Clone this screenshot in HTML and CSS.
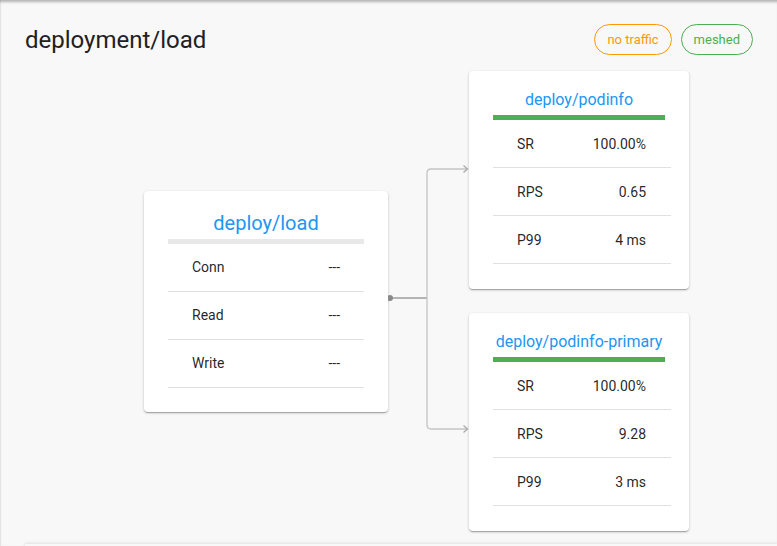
FILE: index.html
```html
<!DOCTYPE html>
<html>
<head>
<meta charset="utf-8">
<link rel="stylesheet" href="styles.css">
</head>
<body>
<div class="panel">
  <header class="header">
    <h1 class="title">deployment/load</h1>
    <div class="chips">
      <span class="chip chip-orange">no traffic</span>
      <span class="chip chip-green">meshed</span>
    </div>
  </header>
  <div class="graph">
    <div class="card card-src">
      <div class="card-title title-lg">deploy/load</div>
      <div class="bar bar-grey"></div>
      <div class="row"><span>Conn</span><span>---</span></div>
      <div class="row"><span>Read</span><span>---</span></div>
      <div class="row"><span>Write</span><span>---</span></div>
    </div>
    <svg class="links" width="81" height="459" viewBox="0 0 81 459">
      <path d="M2 227 H39" stroke="#9e9e9e" stroke-width="1.5" fill="none"/>
      <path d="M39 227 Q39 223 39 221 V102 Q39 98 43 98 H79" stroke="#c4c4c4" stroke-width="1.3" fill="none"/>
      <path d="M39 227 Q39 231 39 233 V354 Q39 358 43 358 H79" stroke="#c4c4c4" stroke-width="1.3" fill="none"/>
      <path d="M75.5 94.5 L79.5 98 L75.5 101.5" stroke="#a8a8a8" stroke-width="1.2" fill="none"/>
      <path d="M75.5 354.5 L79.5 358 L75.5 361.5" stroke="#a8a8a8" stroke-width="1.2" fill="none"/>
      <circle cx="2" cy="227" r="3" fill="#8a8a8a"/>
    </svg>
    <div class="targets">
      <div class="card card-dst">
        <div class="card-title title-md">deploy/podinfo</div>
        <div class="bar bar-green"></div>
        <div class="row"><span>SR</span><span>100.00%</span></div>
        <div class="row"><span>RPS</span><span>0.65</span></div>
        <div class="row"><span>P99</span><span>4 ms</span></div>
      </div>
      <div class="card card-dst">
        <div class="card-title title-md">deploy/podinfo-primary</div>
        <div class="bar bar-green"></div>
        <div class="row"><span>SR</span><span>100.00%</span></div>
        <div class="row"><span>RPS</span><span>9.28</span></div>
        <div class="row"><span>P99</span><span>3 ms</span></div>
      </div>
    </div>
  </div>
  <div class="next-paper"></div>
</div>
</body>
</html>
```
FILE: styles.css
```css
html, body {
  margin: 0;
  padding: 0;
  height: 100%;
  overflow: hidden;
}
body {
  font-family: Roboto, "Noto Sans", "Liberation Sans", sans-serif;
  background: #f8f8f8;
  color: rgba(0, 0, 0, 0.87);
}
.panel {
  height: 100%;
  background: #f8f8f8;
  box-shadow: inset 0 4px 3px -2px rgba(0, 0, 0, 0.28), inset 1px 0 1px rgba(0, 0, 0, 0.08);
  overflow: hidden;
}
.header {
  display: flex;
  justify-content: space-between;
  align-items: flex-start;
  padding: 24px 24px 0 25px;
}
.title {
  margin: 0;
  font-size: 24px;
  font-weight: 400;
  line-height: 32px;
  color: #212121;
}
.chips {
  display: flex;
  gap: 9px;
}
.chip {
  display: inline-flex;
  align-items: center;
  box-sizing: border-box;
  height: 31px;
  padding: 0 12px;
  border-radius: 16px;
  font-size: 13px;
  border: 1px solid;
}
.chip-orange {
  color: #ff9800;
  border-color: #ff9800;
}
.chip-green {
  color: #4caf50;
  border-color: #4caf50;
}
.graph {
  display: flex;
  align-items: center;
  margin-top: 15px;
  padding-left: 144px;
}
.card {
  background: #fff;
  border-radius: 4px;
  box-shadow: 0 1px 3px rgba(0, 0, 0, 0.2), 0 1px 1px rgba(0, 0, 0, 0.14), 0 2px 1px -1px rgba(0, 0, 0, 0.12);
  box-sizing: border-box;
}
.card-src {
  width: 244px;
  padding: 18px 24px 24px;
}
.card-dst {
  width: 220px;
  padding: 17px 18px 25px 24px;
}
.card-title {
  text-align: center;
  color: #2196f3;
  white-space: nowrap;
}
.title-lg {
  font-size: 20px;
  line-height: 28px;
}
.title-md {
  font-size: 16px;
  line-height: 24px;
  margin-right: 6px;
}
.bar {
  height: 5px;
}
.bar-grey {
  background: #e8e8e8;
  margin-top: 2px;
}
.bar-green {
  background: #4caf50;
  margin-top: 3px;
  margin-right: 6px;
}
.row {
  display: flex;
  justify-content: space-between;
  align-items: center;
  height: 48px;
  box-sizing: border-box;
  border-bottom: 1px solid #e0e0e0;
  padding: 0 24px;
  font-size: 14px;
}
.card-src .row {
  padding-bottom: 1px;
}
.card-dst .row {
  padding: 0 25px 0 24px;
}
.links {
  flex: none;
  align-self: stretch;
}
.targets {
  display: flex;
  flex-direction: column;
  gap: 24px;
}
.next-paper {
  height: 20px;
  margin: 13px 0 0 25px;
  background: #f8f8f8;
  box-shadow: 0 -1px 3px rgba(0, 0, 0, 0.1);
}
```
